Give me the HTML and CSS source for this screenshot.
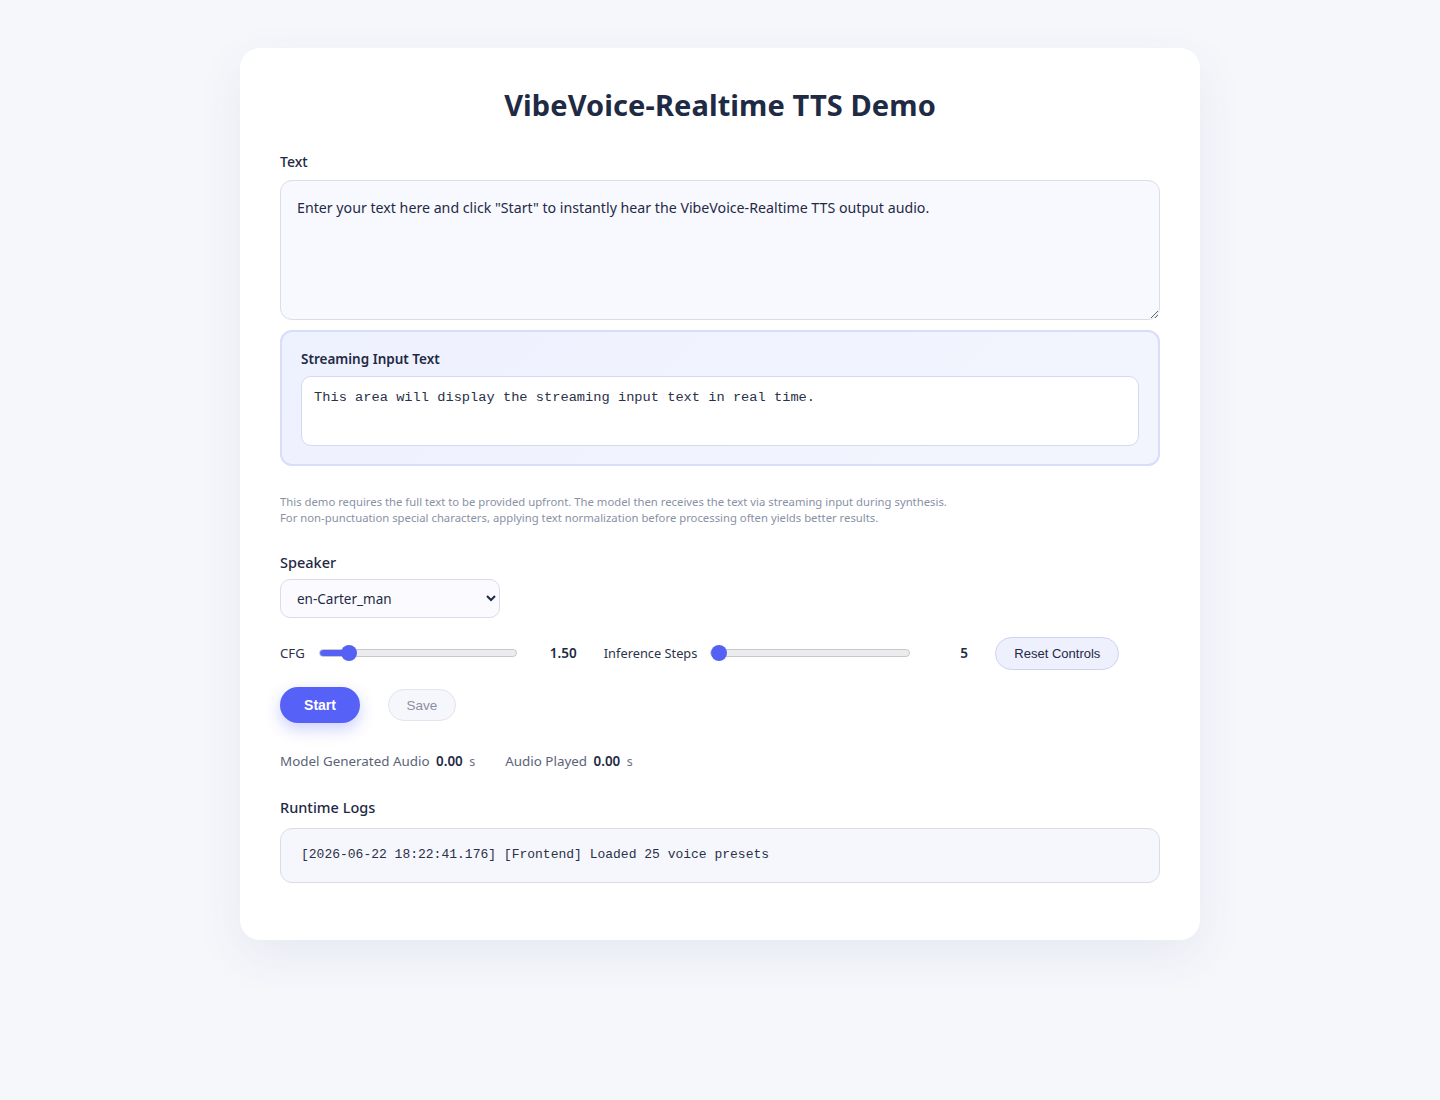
FILE: index.html
```html
<!DOCTYPE html>
<html lang="en">
<head>
<meta charset="utf-8">
<title>VibeVoice-Realtime TTS Demo</title>
<link rel="stylesheet" href="styles.css">
</head>
<body>
<main class="card">
  <h1 class="title">VibeVoice-Realtime TTS Demo</h1>

  <section class="field">
    <label class="label" for="text-input">Text</label>
    <textarea id="text-input" class="text-input">Enter your text here and click "Start" to instantly hear the VibeVoice-Realtime TTS output audio.</textarea>
  </section>

  <section class="stream-box">
    <div class="stream-label">Streaming Input Text</div>
    <div class="stream-output">This area will display the streaming input text in real time.</div>
  </section>

  <p class="note">This demo requires the full text to be provided upfront. The model then receives the text via streaming input during synthesis.<br>For non-punctuation special characters, applying text normalization before processing often yields better results.</p>

  <section class="field speaker">
    <label class="label label-lg" for="speaker">Speaker</label>
    <div class="select-wrap">
      <select id="speaker" class="select">
        <option>en-Carter_man</option>
      </select>
    </div>
  </section>

  <section class="controls">
    <span class="ctl-label">CFG</span>
    <input class="range range-cfg" type="range" min="1.3" max="3" step="0.05" value="1.5" style="--fill: 12%">
    <span class="ctl-value">1.50</span>
    <span class="ctl-label ctl-label-steps">Inference Steps</span>
    <input class="range range-steps" type="range" min="5" max="20" step="1" value="5" style="--fill: 0%">
    <span class="ctl-value ctl-value-steps">5</span>
    <button class="btn-reset" type="button">Reset Controls</button>
  </section>

  <section class="actions">
    <button class="btn-start" type="button">Start</button>
    <button class="btn-save" type="button" disabled>Save</button>
  </section>

  <section class="metrics">
    <span class="metric">Model Generated Audio <b>0.00</b> <small>s</small></span>
    <span class="metric">Audio Played <b>0.00</b> <small>s</small></span>
  </section>

  <section class="field logs">
    <div class="label label-lg">Runtime Logs</div>
    <pre class="log-box">[2026-06-22 18:22:41.176] [Frontend] Loaded 25 voice presets</pre>
  </section>
</main>
</body>
</html>
```

FILE: styles.css
```css
* { box-sizing: border-box; }

body {
  margin: 0;
  padding: 48px 0;
  background: #f5f7fb;
  font-family: "Noto Sans", "Open Sans", sans-serif;
  color: #1f2a44;
}

.card {
  width: 960px;
  margin: 0 auto;
  padding: 37px 40px 57px;
  background: #ffffff;
  border-radius: 20px;
  box-shadow: 0 16px 48px rgba(60, 72, 140, 0.08);
}

.title {
  margin: 0 0 28px;
  text-align: center;
  font-size: 29px;
  font-weight: 700;
  color: #1f2a44;
  letter-spacing: 0.1px;
}

.field { display: flex; flex-direction: column; }

.label {
  font-size: 14px;
  font-weight: 500;
  color: #1f2a44;
  margin-bottom: 9px;
}

.label-lg { font-size: 14.5px; margin-bottom: 7px; }

.text-input {
  width: 100%;
  height: 140px;
  padding: 16px;
  border: 1px solid #d9dde8;
  border-radius: 12px;
  background: #f8f9ff;
  font-family: inherit;
  font-size: 14.2px;
  line-height: 22px;
  color: #1f2a44;
  resize: vertical;
  outline: none;
}

.stream-box {
  margin-top: 10px;
  padding: 18px 19px 18px;
  border: 2px solid #d7ddfa;
  border-radius: 12px;
  background: linear-gradient(135deg, #eef1fe 0%, #f3f5fe 100%);
}

.stream-label {
  font-size: 13.5px;
  font-weight: 600;
  color: #1f2a44;
  margin-bottom: 8px;
}

.stream-output {
  height: 70px;
  padding: 12px 12px;
  border: 1px solid #d3d9f4;
  border-radius: 10px;
  background: #ffffff;
  font-family: "Liberation Mono", monospace;
  font-size: 13.7px;
  line-height: 18px;
  color: #2a3148;
}

.note {
  margin: 28px 0 0;
  font-size: 11.3px;
  line-height: 16px;
  color: #8a91a6;
}

.speaker { margin-top: 26px; }

.select-wrap { width: 220px; }

.select {
  width: 220px;
  height: 39px;
  padding: 0 10px 0 12px;
  border: 1px solid #d9dde8;
  border-radius: 10px;
  background: #fbfbff;
  font-family: inherit;
  font-size: 13.5px;
  color: #1f2a44;
  outline: none;
}

.controls {
  display: flex;
  align-items: center;
  margin-top: 18px;
  height: 34px;
}

.ctl-label {
  font-size: 13.2px;
  color: #2b334a;
}

.ctl-label-steps { font-size: 12.8px; }

.ctl-value {
  font-size: 13.5px;
  font-weight: 600;
  color: #1f2a44;
  width: 28px;
  margin: 0 26px 0 33px;
}

.ctl-value-steps { width: 8px; margin: 0 27px 0 50px; }

.range {
  -webkit-appearance: none;
  appearance: none;
  height: 8px;
  margin: 0 0 0 14px;
  border: 1px solid #c9c9cc;
  border-radius: 4px;
  background: linear-gradient(to right, #5561f5 0%, #5561f5 var(--fill), #ececee var(--fill), #ececee 100%);
  outline: none;
}

.range-cfg { width: 198px; }
.range-steps { width: 200px; margin-left: 13px; }

.range::-webkit-slider-thumb {
  -webkit-appearance: none;
  appearance: none;
  width: 16px;
  height: 16px;
  border-radius: 50%;
  background: #5561f5;
  border: none;
  cursor: pointer;
}

.btn-reset {
  height: 33px;
  padding: 0 18px;
  border: 1px solid #ccd3ef;
  border-radius: 17px;
  background: #eef0fd;
  font-family: "Liberation Sans", Arial, sans-serif;
  font-size: 13px;
  color: #1f2a44;
}

.actions {
  display: flex;
  align-items: center;
  gap: 28px;
  margin-top: 17px;
}

.btn-start {
  width: 80px;
  height: 36px;
  border: none;
  border-radius: 18px;
  background: #5561f7;
  color: #ffffff;
  font-family: "Liberation Sans", Arial, sans-serif;
  font-size: 14px;
  font-weight: 700;
  box-shadow: 0 6px 16px rgba(85, 97, 247, 0.3);
}

.btn-save {
  width: 68px;
  height: 32px;
  border: 1px solid #e2e4ee;
  border-radius: 16px;
  background: #f6f7fc;
  color: #8a8fa0;
  font-family: "Liberation Sans", Arial, sans-serif;
  font-size: 13.5px;
}

.metrics {
  display: flex;
  gap: 30px;
  margin-top: 29px;
  font-size: 13.4px;
  color: #5b6378;
}

.metric b {
  margin-left: 3px;
  font-weight: 600;
  color: #1f2a44;
}

.metric small {
  margin-left: 3px;
  font-size: 12.5px;
  color: #6a7186;
}

.logs { margin-top: 27px; }

.log-box {
  margin: 4px 0 0;
  height: 55px;
  padding: 18px 20px;
  border: 1px solid #d9dce8;
  border-radius: 12px;
  background: #f6f7fc;
  font-family: "Liberation Mono", monospace;
  font-size: 13px;
  line-height: 16px;
  color: #2a3148;
}
```
